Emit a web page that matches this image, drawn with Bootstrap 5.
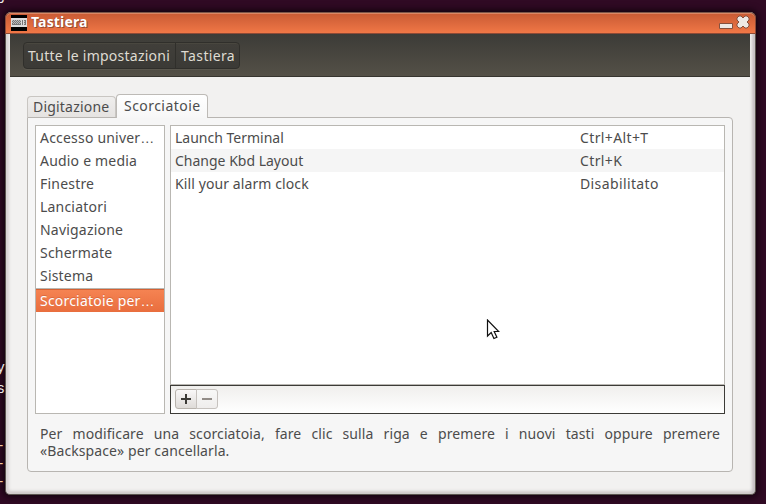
<!DOCTYPE html>
<html lang="it">
<head>
<meta charset="utf-8">
<meta name="viewport" content="width=device-width, initial-scale=1">
<title>Tastiera</title>
<link href="https://cdn.jsdelivr.net/npm/bootstrap@5.3.0/dist/css/bootstrap.min.css" rel="stylesheet">
<script src="https://cdn.jsdelivr.net/npm/bootstrap@5.3.0/dist/js/bootstrap.bundle.min.js" defer></script>
<style>
body{width:766px;height:504px;padding:12px 10px 9px 5px;background:#300a24;color:#4c4c4c;font:14px/23px "Noto Sans","Open Sans",sans-serif}
.desk-text{left:0;width:5px;height:504px;z-index:2;color:#eee;font:14px/18px "Liberation Mono",monospace}
.desk-text span{position:absolute;right:0}
.desk-text .warm{color:#f0c9a0}
.window{width:751px;height:483px;background:#f2f1f0;border:1px solid #5b554f;border-top:0;border-radius:6px 6px 5px 5px;box-shadow:0 0 7px 2px #12030d,inset 4px 0 3px -1px #d8d2d4,inset -4px 0 3px -1px #c5bfc2,inset 0 -4px 3px -1px #cfcac9}
.titlebar{height:22px;margin:0 -1px;padding:0 5px;background:linear-gradient(#c85a34,#f07746);border:1px solid #8d4a36;border-top-color:#7b5649;box-shadow:inset 0 1px #db8664;border-radius:6px 6px 0 0;color:#fff}
.titlebar strong{font-size:14px;line-height:18px;margin:-2px 0 0 4px;letter-spacing:.15px;text-shadow:1px 1px #984b30,-1px 0 #a95235}
.toolbar{height:43px;margin:0 5px 0 4px;padding:8px 13px;background:linear-gradient(#3c3b37,#545047);border-bottom:1px solid #37352f}
.crumbs .btn{height:27px;padding:0 5px 0 4px;font-size:14px;line-height:26px;letter-spacing:.25px;color:#dfdbd2;background:linear-gradient(#413f3a,#3b3a36);border:1px solid #302f2b;border-radius:4px;box-shadow:0 1px #5a574e,inset 0 1px #49473f}
.crumbs .btn:last-child{padding:0 4px 0 5px;letter-spacing:.35px}
.page{padding:16px 21px 0 21px}
.tabs{height:24px;border:0;position:relative;z-index:1}
.tabs .nav-link{width:89px;height:21px;padding:0 5px;line-height:20px;letter-spacing:.2px;color:#4c4c4c;border:1px solid #c9c6c2;border-bottom:0;border-radius:4px 4px 0 0;background:linear-gradient(#efeeed,#e5e3e1);margin:0}
.tabs .nav-link.active{width:92px;height:24px;margin-bottom:-1px;padding:0 7px;line-height:22px;letter-spacing:.45px;color:#4c4c4c;background:linear-gradient(#fff,#f7f7f7);border-color:#bdbab6}
.pane{width:706px;height:355px;padding:7px;background:#f6f6f6;border:1px solid #b8b5b1;border-radius:0 4px 4px 4px}
.lists{height:289px;gap:5px}
.categories{width:130px;background:#fff;border:1px solid #b9b7b2;border-radius:0}
.categories .list-group-item{height:23px;padding:0 4px;line-height:23px;letter-spacing:.2px;border:0;background:none;color:#4c4c4c;white-space:nowrap}
.categories .list-group-item.active{height:23px;color:#fff;background:linear-gradient(#f58352,#e96e3e);border-top:1px solid #d46134;text-shadow:0 -1px #d9693f}
.dots{font-family:"Liberation Sans",sans-serif}
.split{height:1px;margin-top:1px;background:#b9b7b2}
.grid{width:555px}
.rows{height:260px;background:#fff;border:1px solid #b9b7b2}
.entry{height:23px;padding:0 4px;line-height:23px}
.entry:nth-child(2){background:#f5f5f5}
.entry:nth-child(3) .name{letter-spacing:.1px}
.entry .name{width:405px}
.entry .keys{letter-spacing:.38px}
.actions{height:29px;padding:3px 4px;line-height:1;background:linear-gradient(#f0efed,#fff);border:1px solid #3c3b37}
.actions .btn{width:22px;height:20px;padding:0 1px 0 0;border:1px solid #b8b3ad;border-radius:3px;background:linear-gradient(#f9f8f8,#dedbd8);display:flex;align-items:center;justify-content:center}
.actions .btn:last-child{background:linear-gradient(#f8f8f7,#efedec);border-color:#c6c2be}
.hint{margin:11px 5px 0;line-height:17px;letter-spacing:.1px}
.hint .full{text-align-last:justify;white-space:nowrap}
.pointer{left:486px;top:319px}
</style>
</head>
<body class="position-relative overflow-hidden">
<div class="desk-text position-absolute top-0 overflow-hidden" aria-hidden="true">
<span style="top:-13px">g</span><span style="top:359px">y</span><span style="top:380px">s</span><span class="warm" style="top:437px">-</span><span class="warm" style="top:455px">-</span><span class="warm" style="top:473px">-</span>
</div>
<main class="window position-relative">
<header class="titlebar d-flex align-items-center">
<svg width="16" height="16" viewBox="0 0 16 16" shape-rendering="crispEdges"><path d="M0 0h16v16H0z" fill="#000"/><path d="M0 3h16v9H0z" fill="#ddd"/><path d="M1 5h9v5H1zM11 5h1v5h-1zM13 5h2v5h-2z" fill="#777"/><path d="M1 5.500h1m1 0h1m1 0h1m1 0h1m1 0h1M2 6.500h1m1 0h1m1 0h1m1 0h1M1 7.500h1m1 0h1m1 0h1m1 0h1m1 0h1M2 8.500h1m1 0h1m1 0h1m1 0h1M13 6.500h1m-1 2h1" stroke="#bbb"/></svg>
<strong>Tastiera</strong>
<svg class="ms-auto" width="32" height="18" viewBox="0 0 32 18"><path d="M1.500 9.500h13v5h-13z" fill="#eee9e5" stroke="#84513f"/><path d="M21 2h2l2 2 2-2h2l2 2v2l-2 2 2 2v2l-2 2h-2l-2-2-2 2h-2l-2-2v-2l2-2-2-2v-2z" fill="#eee9e5" stroke="#84513f"/></svg>
</header>
<nav class="toolbar">
<div class="btn-group crumbs"><a class="btn">Tutte le impostazioni</a><a class="btn">Tastiera</a></div>
</nav>
<section class="page">
<ul class="nav nav-tabs tabs align-items-end flex-nowrap">
<li class="nav-item"><a class="nav-link">Digitazione</a></li>
<li class="nav-item"><a class="nav-link active">Scorciatoie</a></li>
</ul>
<div class="pane">
<div class="lists d-flex">
<div class="list-group categories flex-shrink-0">
<div class="list-group-item">Accesso univer<span class="dots">…</span></div><div class="list-group-item">Audio e media</div><div class="list-group-item">Finestre</div><div class="list-group-item">Lanciatori</div><div class="list-group-item">Navigazione</div><div class="list-group-item">Schermate</div><div class="list-group-item">Sistema</div>
<div class="split"></div>
<div class="list-group-item active d-flex align-items-center"><span>Scorciatoie per<span class="dots">…</span></span></div>
</div>
<div class="grid d-flex flex-column">
<div class="rows">
<div class="entry d-flex"><span class="name">Launch Terminal</span><span class="keys">Ctrl+Alt+T</span></div>
<div class="entry d-flex"><span class="name">Change Kbd Layout</span><span class="keys">Ctrl+K</span></div>
<div class="entry d-flex"><span class="name">Kill your alarm clock</span><span class="keys">Disabilitato</span></div>
</div>
<div class="actions d-flex align-items-start"><div class="btn-group">
<button class="btn" aria-label="Aggiungi"><svg width="10" height="10"><path d="M0 5h10M5 0v10" stroke="#3c3b37" stroke-width="2"/></svg></button>
<button class="btn" aria-label="Rimuovi"><svg width="10" height="10"><path d="M0 5h10" stroke="#928d88" stroke-width="2"/></svg></button>
</div></div>
</div>
</div>
<div class="hint">
<div class="full">Per modificare una scorciatoia, fare clic sulla riga e premere i nuovi tasti oppure premere</div>
<div>«Backspace» per cancellarla.</div>
</div>
</div>
</section>
</main>
<svg class="pointer position-absolute" width="14" height="22" viewBox="0 0 14 22"><path d="M1.500 1v16l3.700-3.500 2.700 6 3-1.300-2.700-5.700h4.500z" fill="#fff" stroke="#111" stroke-width="1.200"/></svg>
</body>
</html>
